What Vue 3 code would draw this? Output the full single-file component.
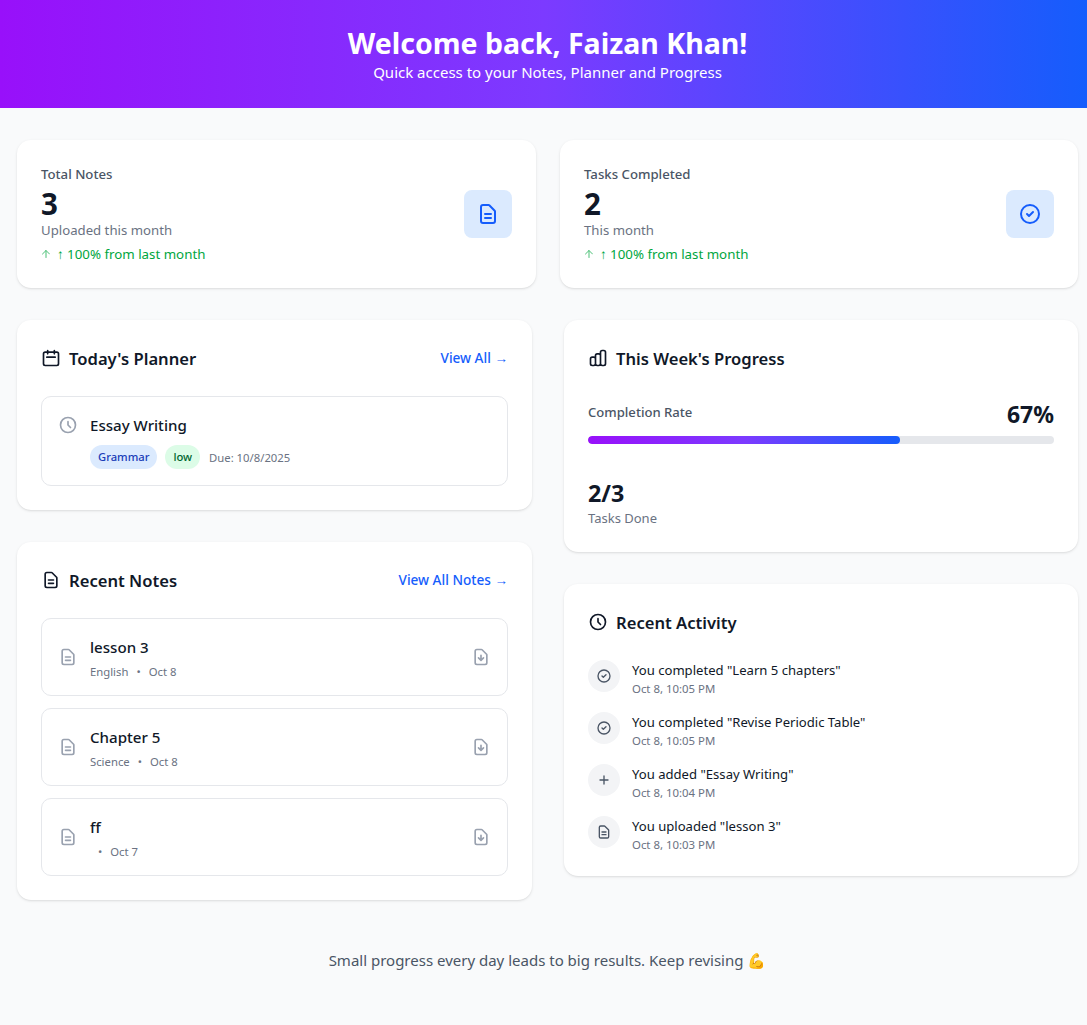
<script setup>
const P = {
  doc: 'M9 12h6m-6 4h6m2 5H7a2 2 0 01-2-2V5a2 2 0 012-2h5.586a1 1 0 01.707.293l5.414 5.414a1 1 0 01.293.707V19a2 2 0 01-2 2z',
  check: 'M9 12l2 2 4-4m6 2a9 9 0 11-18 0 9 9 0 0118 0z',
  cal: 'M8 7V3m8 4V3m-9 8h10M5 21h14a2 2 0 002-2V7a2 2 0 00-2-2H5a2 2 0 00-2 2v12a2 2 0 002 2z',
  clock: 'M12 8v4l3 3m6-3a9 9 0 11-18 0 9 9 0 0118 0z',
  chart: 'M9 19v-6a2 2 0 00-2-2H5a2 2 0 00-2 2v6a2 2 0 002 2h2a2 2 0 002-2zm0 0V9a2 2 0 012-2h2a2 2 0 012 2v10m-6 0a2 2 0 002 2h2a2 2 0 002-2m0 0V5a2 2 0 012-2h2a2 2 0 012 2v14a2 2 0 01-2 2h-2a2 2 0 01-2-2z',
  dl: 'M12 10v6m0 0l-3-3m3 3l3-3m2 8H7a2 2 0 01-2-2V5a2 2 0 012-2h5.586a1 1 0 01.707.293l5.414 5.414a1 1 0 01.293.707V19a2 2 0 01-2 2z',
  plus: 'M12 6v6m0 0v6m0-6h6m-6 0H6',
  up: 'M12 19V5m-7 7l7-7 7 7'
}
const stats = [
  { label: 'Total Notes', value: '3', sub: 'Uploaded this month', icon: P.doc },
  { label: 'Tasks Completed', value: '2', sub: 'This month', icon: P.check }
]
const notes = [
  { title: 'lesson 3', subject: 'English', date: 'Oct 8' },
  { title: 'Chapter 5', subject: 'Science', date: 'Oct 8' },
  { title: 'ff', subject: '', date: 'Oct 7' }
]
const activity = [
  { text: 'You completed "Learn 5 chapters"', time: 'Oct 8, 10:05 PM', icon: P.check },
  { text: 'You completed "Revise Periodic Table"', time: 'Oct 8, 10:05 PM', icon: P.check },
  { text: 'You added "Essay Writing"', time: 'Oct 8, 10:04 PM', icon: P.plus },
  { text: 'You uploaded "lesson 3"', time: 'Oct 8, 10:03 PM', icon: P.doc }
]
</script>

<template>
  <div class="page">
    <header class="hero">
      <h1>Welcome back, Faizan Khan!</h1>
      <p>Quick access to your Notes, Planner and Progress</p>
    </header>

    <main class="main">
      <section class="stats">
        <div v-for="s in stats" :key="s.label" class="card stat">
          <div>
            <div class="stat-label">{{ s.label }}</div>
            <div class="stat-value">{{ s.value }}</div>
            <div class="stat-sub">{{ s.sub }}</div>
            <div class="stat-delta">
              <svg class="delta-icon" viewBox="0 0 24 24" fill="none" stroke="currentColor" stroke-width="2" stroke-linecap="round" stroke-linejoin="round"><path :d="P.up" /></svg>
              <span>↑ 100% from last month</span>
            </div>
          </div>
          <div class="stat-icon">
            <svg width="24" height="24" viewBox="0 0 24 24" fill="none" stroke="currentColor" stroke-width="2" stroke-linecap="round" stroke-linejoin="round"><path :d="s.icon" /></svg>
          </div>
        </div>
      </section>

      <section class="columns">
        <div class="col">
          <div class="card panel">
            <div class="panel-head">
              <h2><svg class="ic20" viewBox="0 0 24 24" fill="none" stroke="currentColor" stroke-width="2" stroke-linecap="round" stroke-linejoin="round"><path :d="P.cal" /></svg><span class="h-text">Today's Planner</span></h2>
              <a class="link">View All <span class="lk-arrow">→</span></a>
            </div>
            <div class="item task">
              <svg class="ic20 muted" viewBox="0 0 24 24" fill="none" stroke="currentColor" stroke-width="2" stroke-linecap="round" stroke-linejoin="round"><path :d="P.clock" /></svg>
              <div>
                <div class="item-title">Essay Writing</div>
                <div class="chips">
                  <span class="chip blue">Grammar</span>
                  <span class="chip green">low</span>
                  <span class="due">Due: 10/8/2025</span>
                </div>
              </div>
            </div>
          </div>

          <div class="card panel">
            <div class="panel-head">
              <h2><svg class="ic20" viewBox="0 0 24 24" fill="none" stroke="currentColor" stroke-width="2" stroke-linecap="round" stroke-linejoin="round"><path :d="P.doc" /></svg><span class="h-text">Recent Notes</span></h2>
              <a class="link">View All Notes <span class="lk-arrow">→</span></a>
            </div>
            <div class="note-list">
              <div v-for="n in notes" :key="n.title" class="item note">
                <svg class="ic20 muted" viewBox="0 0 24 24" fill="none" stroke="currentColor" stroke-width="2" stroke-linecap="round" stroke-linejoin="round"><path :d="P.doc" /></svg>
                <div class="note-body">
                  <div class="item-title">{{ n.title }}</div>
                  <div class="note-meta"><span>{{ n.subject }}</span><span>•</span><span>{{ n.date }}</span></div>
                </div>
                <svg class="ic20 muted" viewBox="0 0 24 24" fill="none" stroke="currentColor" stroke-width="2" stroke-linecap="round" stroke-linejoin="round"><path :d="P.dl" /></svg>
              </div>
            </div>
          </div>
        </div>

        <div class="col">
          <div class="card panel">
            <div class="panel-head">
              <h2><svg class="ic20" viewBox="0 0 24 24" fill="none" stroke="currentColor" stroke-width="2" stroke-linecap="round" stroke-linejoin="round"><path :d="P.chart" /></svg><span class="h-text">This Week's Progress</span></h2>
            </div>
            <div class="rate-row">
              <span class="rate-label">Completion Rate</span>
              <span class="rate-value">67%</span>
            </div>
            <div class="bar"><div class="fill" :style="{ width: '67%' }"></div></div>
            <div class="done">2/3</div>
            <div class="done-label">Tasks Done</div>
          </div>

          <div class="card panel">
            <div class="panel-head">
              <h2><svg class="ic20" viewBox="0 0 24 24" fill="none" stroke="currentColor" stroke-width="2" stroke-linecap="round" stroke-linejoin="round"><path :d="P.clock" /></svg><span class="h-text">Recent Activity</span></h2>
            </div>
            <div class="activity">
              <div v-for="(a, i) in activity" :key="i" class="act">
                <span class="act-icon">
                  <svg width="16" height="16" viewBox="0 0 24 24" fill="none" stroke="currentColor" stroke-width="2" stroke-linecap="round" stroke-linejoin="round"><path :d="a.icon" /></svg>
                </span>
                <div>
                  <div class="act-text">{{ a.text }}</div>
                  <div class="act-time">{{ a.time }}</div>
                </div>
              </div>
            </div>
          </div>
        </div>
      </section>

      <footer class="foot">Small progress every day leads to big results. Keep revising 💪</footer>
    </main>
  </div>
</template>

<style>
html, body { margin: 0; background: #f9fafb; }
</style>

<style scoped>
.page {
  min-height: 1025px;
  background: #f9fafb;
  color: #101828;
  font-family: "Noto Sans", "Open Sans", sans-serif;
  overflow: hidden;
}
.hero {
  height: 108px;
  box-sizing: border-box;
  padding: 24px 0 0 8px;
  text-align: center;
  color: #fff;
  background: linear-gradient(90deg, #9810fa, #7c3aff 50%, #155dfc);
}
.hero h1 { margin: 0; font-size: 28.5px; line-height: 38px; font-weight: 700; }
.hero p { margin: 0; font-size: 15px; line-height: 20px; }
.main { padding: 32px 9px 0 17px; }
.card {
  background: #fff;
  border-radius: 14px;
  box-shadow: 0 1px 3px rgba(0,0,0,.1), 0 1px 2px -1px rgba(0,0,0,.1);
}
.stats { display: grid; grid-template-columns: 519px 518px; gap: 24px; }
.stat { display: flex; align-items: center; justify-content: space-between; padding: 24px; }
.stat-label { font-size: 13.2px; line-height: 20px; font-weight: 500; color: #4a5565; }
.stat-value { height: 36px; font-size: 29.5px; line-height: 40px; font-weight: 700; }
.stat-sub { font-size: 13.2px; line-height: 20px; color: #6a7282; }
.stat-delta { display: flex; align-items: center; gap: 5px; margin-top: 4px; font-size: 13.3px; line-height: 20px; color: #00a63e; }
.delta-icon { width: 12px; height: 12px; margin-left: -1px; flex: none; opacity: .7; }
.stat-icon {
  width: 48px; height: 48px; border-radius: 8px;
  background: #dbeafe; color: #155dfc;
  display: flex; align-items: center; justify-content: center;
}
.columns { display: grid; grid-template-columns: 515px 514px; gap: 32px; margin-top: 32px; }
.col { display: flex; flex-direction: column; gap: 32px; }
.panel { padding: 24px; }
.panel-head { display: flex; align-items: center; justify-content: space-between; height: 28px; margin-bottom: 24px; }
.panel-head h2 { display: flex; align-items: center; gap: 8px; margin: 0; font-size: 16.6px; line-height: 28px; font-weight: 600; }
.h-text { padding-top: 2px; }
.ic20 { width: 20px; height: 20px; flex: none; }
.muted { color: #99a1af; }
.link { font-size: 13.6px; line-height: 20px; font-weight: 500; color: #155dfc; }
.lk-arrow { font-family: "Liberation Sans", sans-serif; }
.item { border: 1px solid #e5e7eb; border-radius: 10px; padding: 16px; display: flex; gap: 12px; }
.item-title { font-size: 15.1px; line-height: 24px; font-weight: 500; }
.task .ic20 { margin-top: 2px; }
.chips { display: flex; align-items: center; gap: 8px; margin-top: 8px; }
.chip { padding: 0 8px; line-height: 24px; font-size: 11.2px; font-weight: 500; border-radius: 12px; }
.chip.blue { background: #dbeafe; color: #193cb8; }
.chip.green { background: #dcfce7; color: #016630; }
.due { margin-left: 1px; font-size: 11.3px; color: #6a7282; }
.note-list { display: flex; flex-direction: column; gap: 12px; }
.note { align-items: center; }
.note-body { flex: 1; }
.note-meta { display: flex; gap: 8px; height: 16px; margin-top: 4px; font-size: 11.3px; line-height: 18px; color: #6a7282; }
.rate-row { display: flex; align-items: center; justify-content: space-between; height: 32px; margin-bottom: 8px; }
.rate-label { font-size: 13.1px; font-weight: 500; color: #4a5565; }
.rate-value { font-size: 23px; font-weight: 700; margin-top: 4px; }
.bar { height: 8px; border-radius: 4px; background: #e5e7eb; overflow: hidden; }
.fill { height: 100%; border-radius: 4px; background: linear-gradient(90deg, #9810fa, #7c3aff 50%, #155dfc); }
.done { height: 28px; margin-top: 36px; font-size: 23.3px; line-height: 26px; font-weight: 700; }
.done-label { font-size: 13px; line-height: 20px; color: #6a7282; }
.activity { display: flex; flex-direction: column; gap: 16px; }
.act { display: flex; gap: 12px; height: 36px; }
.act-icon {
  width: 32px; height: 32px; flex: none; border-radius: 50%;
  background: #f3f4f6; color: #4a5565;
  display: flex; align-items: center; justify-content: center;
}
.act-text { font-size: 13.1px; line-height: 20px; }
.act-time { height: 16px; font-size: 11.4px; line-height: 18px; color: #6a7282; }
.foot { margin-top: 50px; text-align: center; font-size: 15px; line-height: 20px; color: #4a5565; }
</style>
